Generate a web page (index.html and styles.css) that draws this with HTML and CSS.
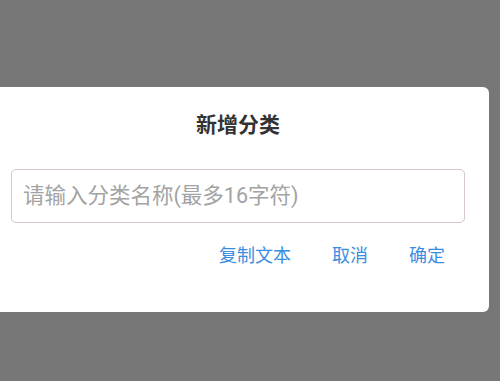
FILE: index.html
```html
<!DOCTYPE html>
<html lang="zh">
<head>
<meta charset="utf-8">
<link rel="stylesheet" href="styles.css">
</head>
<body>
<div class="screen">
  <div class="dialog">
    <div class="title">新增分类</div>
    <div class="field"><span class="placeholder">请输入分类名称(最多16字符)</span></div>
    <div class="actions">
      <span class="btn">复制文本</span>
      <span class="btn">取消</span>
      <span class="btn">确定</span>
    </div>
  </div>
</div>
</body>
</html>
```
FILE: styles.css
```css
html, body {
  margin: 0;
  padding: 0;
  width: 500px;
  height: 381px;
  overflow: hidden;
  background: #777777;
  font-family: Roboto, "Noto Sans CJK SC", sans-serif;
}
.screen {
  padding-top: 87px;
}
.dialog {
  margin-left: -13px;
  width: 502px;
  box-sizing: border-box;
  background: #ffffff;
  border-radius: 6px;
  padding: 23px 24px 44px 24px;
}
.title {
  text-align: center;
  font-size: 21px;
  font-weight: bold;
  line-height: 30px;
  color: #333333;
}
.field {
  margin-top: 29px;
  height: 54px;
  box-sizing: border-box;
  border: 1.5px solid #d4c8cb;
  border-radius: 5px;
  display: flex;
  align-items: center;
  padding-left: 11px;
}
.placeholder {
  font-size: 21.5px;
  color: #a3a3a3;
  line-height: 30px;
}
.actions {
  margin-top: 21px;
  display: flex;
  justify-content: flex-end;
  padding-right: 20px;
  gap: 41px;
}
.btn {
  font-size: 18px;
  line-height: 24px;
  color: #3b8de2;
}
```
